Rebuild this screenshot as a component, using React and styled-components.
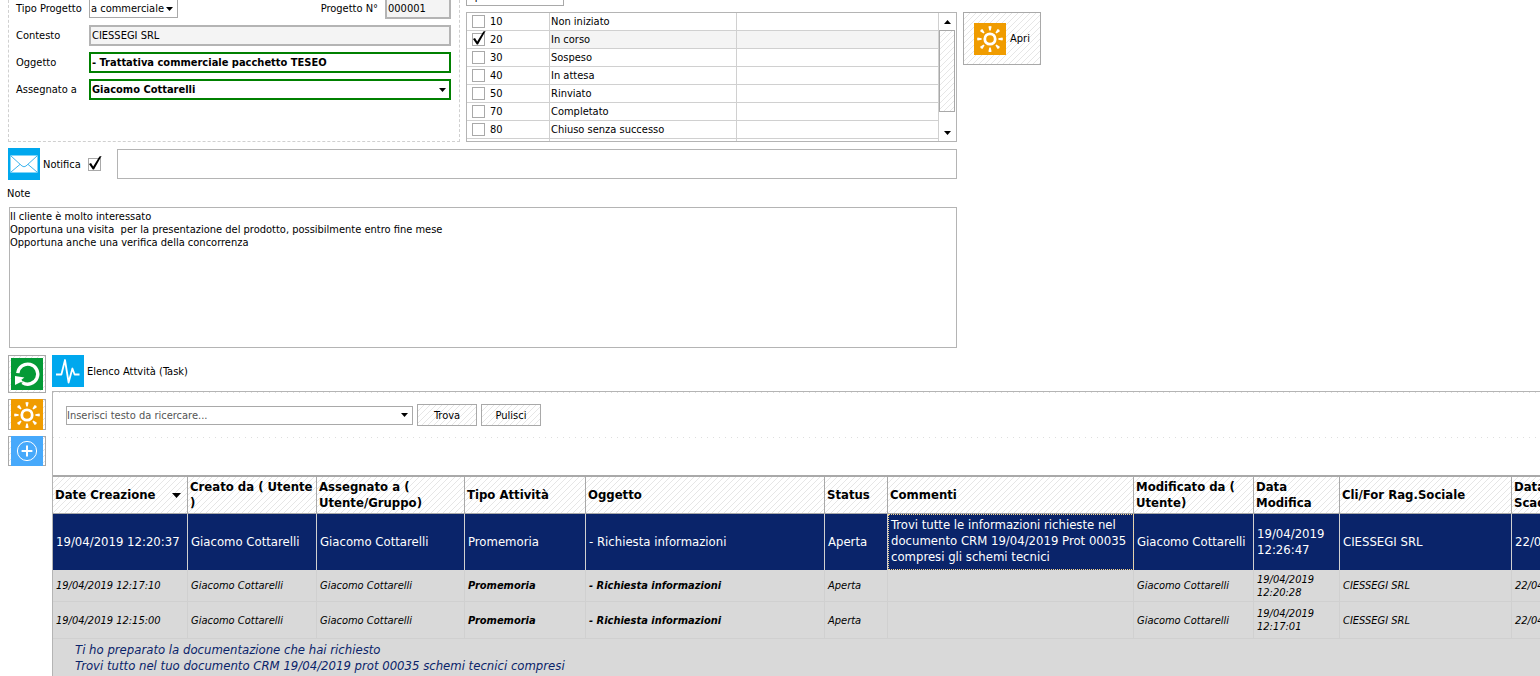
import React from "react";
import styled, { createGlobalStyle } from "styled-components";

const font = `Tahoma, "DejaVu Sans Condensed", "Noto Sans", sans-serif`;
const border = "#a9a9a9";
const softBorder = "#d0d0d0";

const statuses = [
  { code: "10", name: "Non iniziato" },
  { code: "20", name: "In corso", checked: true },
  { code: "30", name: "Sospeso" },
  { code: "40", name: "In attesa" },
  { code: "50", name: "Rinviato" },
  { code: "70", name: "Completato" },
  { code: "80", name: "Chiuso senza successo" },
];

const columns = [
  { title: "Date Creazione", width: 135, sorted: true },
  { title: "Creato da ( Utente )", width: 129 },
  { title: "Assegnato a ( Utente/Gruppo)", width: 148 },
  { title: "Tipo Attività", width: 121 },
  { title: "Oggetto", width: 239 },
  { title: "Status", width: 63 },
  { title: "Commenti", width: 246 },
  { title: "Modificato da ( Utente)", width: 120 },
  { title: "Data Modifica", width: 86 },
  { title: "Cli/For Rag.Sociale", width: 172 },
  { title: "Data Scadenza", width: 90 },
];

const tasks = [
  {
    created: "19/04/2019 12:20:37",
    comment:
      "Trovi tutte le informazioni richieste nel documento CRM 19/04/2019 Prot 00035 compresi gli schemi tecnici",
    modified: "19/04/2019 12:26:47",
    selected: true,
    height: 56,
  },
  {
    created: "19/04/2019 12:17:10",
    comment: "",
    modified: "19/04/2019 12:20:28",
    height: 32,
  },
  {
    created: "19/04/2019 12:15:00",
    comment: "",
    modified: "19/04/2019 12:17:01",
    height: 37,
  },
];

const notes = `Il cliente è molto interessato
Opportuna una visita  per la presentazione del prodotto, possibilmente entro fine mese
Opportuna anche una verifica della concorrenza`;

const SunIcon = ({ height = 32 }) => (
  <svg width="32" height={height} viewBox={`0 0 32 ${height}`} aria-hidden="true">
    <rect width="32" height="32" fill="#f09c00" />
    <circle cx="16" cy="16" r="5.2" fill="none" stroke="#fff" strokeWidth="2.8" />
    {[0, 45, 90, 135, 180, 225, 270, 315].map((angle) => (
      <path
        key={angle}
        d="M14.4 3.6Q16 2.4 17.6 3.6L16.7 7.6H15.3Z"
        fill="#fff"
        transform={`rotate(${angle} 16 16)`}
      />
    ))}
  </svg>
);

const MailIcon = () => (
  <svg width="32" height="32" viewBox="0 0 32 32" aria-hidden="true">
    <rect width="32" height="32" fill="#00a8ee" />
    <rect x="2.5" y="7.5" width="27" height="17" fill="#fff" />
    <path
      d="M3 8L14 18Q16 19.6 18 18L29 8M3 24L12 16.4M29 24L20 16.4"
      fill="none"
      stroke="#3cb4ee"
      strokeWidth="1"
    />
  </svg>
);

const RefreshIcon = () => (
  <svg width="32" height="32" viewBox="0 0 32 32" aria-hidden="true">
    <rect width="32" height="32" fill="#049a36" />
    <path
      d="M6.8 15.2A10 10 0 1 1 11.4 24.6"
      fill="none"
      stroke="#fff"
      strokeWidth="3.4"
    />
    <path d="M4 18L13.4 19.6L10.4 21.8L12.6 24.4L9.4 24.2L4 27Z" fill="#fff" />
  </svg>
);

const PlusIcon = () => (
  <svg width="32" height="30" viewBox="0 0 32 30" aria-hidden="true">
    <rect width="32" height="30" fill="#47a9fb" />
    <circle cx="16" cy="15" r="9.6" fill="none" stroke="#fff" strokeWidth="1" />
    <path d="M16 9.6V20.4M10.6 15H21.4" stroke="#fff" strokeWidth="2" />
  </svg>
);

const PulseIcon = () => (
  <svg width="32" height="32" viewBox="0 0 32 32" aria-hidden="true">
    <rect width="32" height="32" fill="#00a8ee" />
    <path
      d="M4 19.5H9.4L13 5L16.6 27.5L20.4 13.5L22.6 19.5H27.5"
      fill="none"
      stroke="#fff"
      strokeWidth="1.8"
      strokeLinejoin="round"
    />
  </svg>
);

const Arrow = ({ up }) => (
  <svg width="7" height="4" viewBox="0 0 7 4" aria-hidden="true">
    <path d={up ? "M0 4L3.5 0L7 4Z" : "M0 0H7L3.5 4Z"} fill="#000" />
  </svg>
);

const Select = ({ strong, cut, id, value }) => (
  <SelectBox $cut={cut}>
    <SelectField id={id} $strong={strong} $cut={cut}>
      <option>{value}</option>
    </SelectField>
    <SelectArrow>
      <Arrow />
    </SelectArrow>
  </SelectBox>
);

export default function App() {
  return (
    <Page>
      <GlobalStyle />
      <Top>
        <ProjectForm>
          <FirstLabel htmlFor="type">Tipo Progetto</FirstLabel>
          <FirstLine>
            <Select id="type" value="a commerciale" cut />
            <NumberLabel htmlFor="number">Progetto N°</NumberLabel>
            <NumberField id="number" defaultValue="000001" readOnly />
          </FirstLine>
          <Label htmlFor="context">Contesto</Label>
          <ReadField id="context" defaultValue="CIESSEGI SRL" readOnly />
          <Label htmlFor="subject">Oggetto</Label>
          <StrongField
            id="subject"
            defaultValue="- Trattativa commerciale pacchetto TESEO"
          />
          <Label htmlFor="owner">Assegnato a</Label>
          <Select id="owner" value="Giacomo Cottarelli" strong />
        </ProjectForm>

        <StatusPanel>
          <StateClip>
            <StateField aria-label="Stato" defaultValue="Aperto" />
          </StateClip>
          <StatusBox>
            <StatusTable>
              <colgroup>
                <col width="83" />
                <col width="187" />
                <col />
              </colgroup>
              <tbody>
                {statuses.map((s) => (
                  <StatusRow key={s.code} $current={s.checked}>
                    <td>
                      <CheckLabel>
                        <Checkbox defaultChecked={s.checked} />
                        {s.code}
                      </CheckLabel>
                    </td>
                    <td>{s.name}</td>
                    <td />
                  </StatusRow>
                ))}
                <StatusRow>
                  <td />
                  <td />
                  <td />
                </StatusRow>
              </tbody>
            </StatusTable>
            <Scrollbar>
              <ScrollEnd>
                <Arrow up />
              </ScrollEnd>
              <ScrollThumb />
              <ScrollEnd>
                <Arrow />
              </ScrollEnd>
            </Scrollbar>
          </StatusBox>
        </StatusPanel>

        <OpenButton>
          <SunIcon />
          Apri
        </OpenButton>
      </Top>

      <NotifyRow>
        <MailIcon />
        <NotifyLabel>
          Notifica
          <Checkbox defaultChecked />
        </NotifyLabel>
        <NotifyField aria-label="Destinatari notifica" />
      </NotifyRow>

      <NoteLabel htmlFor="notes">Note</NoteLabel>
      <Notes id="notes" defaultValue={notes} />

      <Bottom>
        <Side>
          <SideButton aria-label="Aggiorna" $height={38}>
            <RefreshIcon />
          </SideButton>
          <SideButton aria-label="Apri attività" $height={31}>
            <SunIcon height={31} />
          </SideButton>
          <SideButton aria-label="Nuova attività" $height={30}>
            <PlusIcon />
          </SideButton>
        </Side>
        <Activities>
          <Heading>
            <PulseIcon />
            Elenco Attvità (Task)
          </Heading>
          <Panel>
            <SearchBar>
              <SearchBox>
                <SearchInput
                  aria-label="Cerca"
                  placeholder="Inserisci testo da ricercare..."
                />
                <SelectArrow>
                  <Arrow />
                </SelectArrow>
              </SearchBox>
              <SearchButton>Trova</SearchButton>
              <SearchButton>Pulisci</SearchButton>
            </SearchBar>
            <GroupBar />
            <TaskTable>
              <colgroup>
                {columns.map((c) => (
                  <col key={c.title} width={c.width} />
                ))}
              </colgroup>
              <thead>
                <tr>
                  {columns.map((c) => (
                    <HeadCell key={c.title}>
                      <HeadInner>
                        {c.title}
                        {c.sorted && (
                          <SortArrow viewBox="0 0 9 5" aria-hidden="true">
                            <path d="M0 0H9L4.5 5Z" />
                          </SortArrow>
                        )}
                      </HeadInner>
                    </HeadCell>
                  ))}
                </tr>
              </thead>
              <tbody>
                {tasks.map((t) => (
                  <TaskRow key={t.created} $selected={t.selected} $height={t.height}>
                    <td>{t.created}</td>
                    <td>Giacomo Cottarelli</td>
                    <td>Giacomo Cottarelli</td>
                    <StrongCell $strong={!t.selected}>Promemoria</StrongCell>
                    <StrongCell $strong={!t.selected}>
                      - Richiesta informazioni
                    </StrongCell>
                    <td>Aperta</td>
                    <CommentCell $focus={t.selected}>{t.comment}</CommentCell>
                    <td>Giacomo Cottarelli</td>
                    <td>{t.modified}</td>
                    <td>CIESSEGI SRL</td>
                    <NoWrapCell>22/04/2019</NoWrapCell>
                  </TaskRow>
                ))}
                <tr>
                  <Preview colSpan={columns.length}>
                    Ti ho preparato la documentazione che hai richiesto
                    <br />
                    Trovi tutto nel tuo documento CRM 19/04/2019 prot 00035
                    schemi tecnici compresi
                  </Preview>
                </tr>
              </tbody>
            </TaskTable>
          </Panel>
        </Activities>
      </Bottom>
    </Page>
  );
}

const GlobalStyle = createGlobalStyle`
  * {
    box-sizing: border-box;
  }
  body {
    margin: 0;
    background: #fff;
    overflow: hidden;
  }
  body, input, select, textarea, button {
    font-family: ${font};
    font-size: 11px;
    line-height: 13px;
    color: #000;
  }
  input, select, textarea, button {
    margin: 0;
    border-radius: 0;
    outline: none;
  }
  svg {
    display: block;
    flex: none;
  }
`;

// light diagonal lines used on every raised surface
const hatch = `
  background-color: #fff;
  background-image: linear-gradient(135deg, transparent 42%, #e6e6e6 42%, #e6e6e6 58%, transparent 58%);
  background-size: 6px 6px;
`;

const Page = styled.main`
  height: 100vh;
  display: flex;
  flex-direction: column;
  overflow: hidden;
`;

const Top = styled.div`
  display: flex;
  align-items: flex-start;
  gap: 6px;
  padding-left: 8px;
`;

const ProjectForm = styled.form`
  width: 452px;
  height: 142px;
  display: grid;
  grid-template-columns: 73px 1fr;
  grid-template-rows: 19px 21px 21px 21px;
  row-gap: 6px;
  padding: 0 8px 0 7px;
  border: 1px dashed ${softBorder};
  border-top: 0;
`;

const Label = styled.label`
  align-self: center;
`;

const FirstLabel = styled.label`
  padding-top: 2px;
`;

const FirstLine = styled.div`
  display: flex;
  align-items: flex-start;
`;

const NumberLabel = styled.label`
  margin-left: auto;
  padding: 2px 7px 0 0;
`;

const Field = styled.input`
  width: 100%;
  height: 21px;
  padding: 0 1px;
  border: 2px solid #b4b4b4;
`;

const ReadField = styled(Field)`
  background: #f4f4f4;
`;

const NumberField = styled(ReadField)`
  width: 66px;
  height: 19px;
  border-top: 0;
`;

const StrongField = styled(Field)`
  border-color: #008000;
  font-weight: bold;
`;

const SelectBox = styled.div`
  position: relative;
  width: ${(p) => (p.$cut ? "89px" : "100%")};
`;

const SelectField = styled.select`
  appearance: none;
  display: block;
  width: 100%;
  height: ${(p) => (p.$cut ? "18px" : "21px")};
  padding: 0 12px 0 1px;
  background: #fff;
  border: ${(p) => (p.$strong ? "2px solid #008000" : `1px solid ${border}`)};
  ${(p) => p.$cut && "border-top: 0;"}
  font-weight: ${(p) => (p.$strong ? "bold" : "normal")};
`;

const SelectArrow = styled.span`
  position: absolute;
  right: 5px;
  top: 0;
  bottom: 0;
  display: flex;
  align-items: center;
  pointer-events: none;
`;

const StatusPanel = styled.section`
  width: 491px;
`;

// the state box scrolls out under the window's top edge
const StateClip = styled.div`
  width: 98px;
  height: 6px;
  margin-bottom: 6px;
  display: flex;
  align-items: flex-end;
  overflow: hidden;
`;

const StateField = styled.input`
  width: 100%;
  height: 19px;
  flex: none;
  padding: 0 1px;
  border: 1px solid ${border};
`;

const StatusBox = styled.div`
  display: flex;
  height: 130px;
  border: 1px solid #b4b4b4;
  overflow: hidden;
`;

const StatusTable = styled.table`
  flex: 1;
  table-layout: fixed;
  border-collapse: separate;
  border-spacing: 0;
`;

const StatusRow = styled.tr`
  height: 18px;
  td {
    padding: 0 1px;
    border-right: 1px solid ${softBorder};
    border-bottom: 1px solid ${softBorder};
  }
  td + td {
    background: ${(p) => (p.$current ? "#f4f4f4" : "#fff")};
  }
`;

const CheckLabel = styled.label`
  display: flex;
  align-items: center;
  gap: 5px;
  padding-left: 4px;
`;

const Checkbox = (props) => (
  <CheckWrap>
    <CheckInput type="checkbox" {...props} />
    <CheckMark viewBox="0 0 14 16" aria-hidden="true">
      <path d="M1 9L3 8L5.2 11.5L11.4 1.5L13.6 1L6 14.5H4.8Z" />
    </CheckMark>
  </CheckWrap>
);

const CheckWrap = styled.span`
  position: relative;
  width: 13px;
  height: 13px;
  flex: none;
`;

const CheckMark = styled.svg`
  position: absolute;
  left: 0;
  bottom: 0;
  width: 14px;
  height: 16px;
  display: none;
  pointer-events: none;
`;

const CheckInput = styled.input`
  appearance: none;
  display: block;
  width: 13px;
  height: 13px;
  background: #fff;
  border: 1px solid ${border};
  &:checked + ${CheckMark} {
    display: block;
  }
`;

const Scrollbar = styled.div`
  width: 17px;
  display: flex;
  flex-direction: column;
`;

const ScrollEnd = styled.div`
  height: 17px;
  display: flex;
  align-items: center;
  justify-content: center;
  &:last-child {
    margin-top: auto;
  }
`;

const ScrollThumb = styled.div`
  width: 16px;
  height: 82px;
  border: 1px solid ${border};
  ${hatch}
`;

const Button = styled.button.attrs({ type: "button" })`
  display: flex;
  align-items: center;
  justify-content: center;
  padding: 0;
  border: 1px solid ${border};
  ${hatch}
`;

const OpenButton = styled(Button)`
  width: 78px;
  height: 53px;
  margin-top: 12px;
  gap: 4px;
`;

const NotifyRow = styled.div`
  width: 949px;
  display: flex;
  align-items: center;
  margin: 6px 0 0 8px;
`;

const NotifyLabel = styled.label`
  display: flex;
  align-items: center;
  gap: 7px;
  margin: 0 16px 0 3px;
`;

const NotifyField = styled.input`
  flex: 1;
  height: 30px;
  border: 1px solid #b4b4b4;
`;

const NoteLabel = styled.label`
  padding: 7px 0 0 7px;
`;

const Notes = styled.textarea`
  width: 948px;
  height: 141px;
  flex: none;
  margin: 7px 0 0 9px;
  padding: 2px 0;
  border: 1px solid #b4b4b4;
  resize: none;
`;

const Bottom = styled.div`
  flex: 1;
  min-height: 0;
  display: flex;
  gap: 6px;
  padding: 7px 0 0 8px;
`;

const Side = styled.div`
  display: flex;
  flex-direction: column;
  gap: 6px;
`;

const SideButton = styled(Button)`
  width: 38px;
  height: ${(p) => p.$height}px;
`;

const Activities = styled.section`
  flex: 1;
  min-width: 0;
  display: flex;
  flex-direction: column;
`;

const Heading = styled.div`
  display: flex;
  align-items: center;
  gap: 3px;
  margin-bottom: 4px;
`;

const Panel = styled.div`
  flex: 1;
  min-height: 0;
  border-top: 1px solid #b4b4b4;
  border-left: 1px solid #b4b4b4;
  overflow: hidden;
`;

const dots = `repeating-linear-gradient(90deg, #dedede 0, #dedede 1px, transparent 1px, transparent 6px)`;

const SearchBar = styled.div`
  height: 46px;
  display: flex;
  align-items: center;
  gap: 4px;
  padding-left: 13px;
  background: ${dots} 0 0 / 100% 1px no-repeat, ${dots} 0 100% / 100% 1px no-repeat;
`;

const SearchBox = styled.div`
  position: relative;
  width: 347px;
`;

const SearchInput = styled.input`
  display: block;
  width: 100%;
  height: 19px;
  padding: 0 16px 0 0;
  border: 1px solid ${border};
  &::placeholder {
    color: #555;
    opacity: 1;
  }
`;

const SearchButton = styled(Button)`
  width: 60px;
  height: 22px;
`;

const GroupBar = styled.div`
  height: 37px;
`;

const TaskTable = styled.table`
  width: 1549px;
  table-layout: fixed;
  border-collapse: separate;
  border-spacing: 0;
  border-top: 2px solid ${border};
  font-size: 13px;
  line-height: 16px;
  td {
    padding: 0 2px 0 3px;
  }
`;

const HeadCell = styled.th`
  height: 37px;
  padding: 0 0 0 2px;
  text-align: left;
  border-right: 1px solid ${border};
  border-bottom: 1px solid ${border};
  ${hatch}
`;

const HeadInner = styled.div`
  display: flex;
  align-items: center;
  justify-content: space-between;
`;

const SortArrow = styled.svg`
  width: 9px;
  height: 5px;
  margin-right: 6px;
`;

const TaskRow = styled.tr`
  height: ${(p) => p.$height}px;
  color: ${(p) => (p.$selected ? "#fff" : "#000")};
  background: ${(p) => (p.$selected ? "#0a246a" : "#d9d9d9")};
  font-size: ${(p) => (p.$selected ? "13px" : "11px")};
  line-height: ${(p) => (p.$selected ? "16px" : "13px")};
  font-style: ${(p) => (p.$selected ? "normal" : "italic")};
  td {
    border-right: 1px solid ${softBorder};
    border-bottom: ${(p) => (p.$selected ? "0" : `1px solid ${softBorder}`)};
  }
`;

const StrongCell = styled.td`
  font-weight: ${(p) => (p.$strong ? "bold" : "normal")};
`;

const CommentCell = styled.td`
  vertical-align: top;
  outline: ${(p) => (p.$focus ? "1px dotted #f5d58c" : "none")};
  outline-offset: -1px;
  && {
    padding-top: 3px;
  }
`;

const NoWrapCell = styled.td`
  white-space: nowrap;
`;

const Preview = styled.td`
  height: 60px;
  vertical-align: top;
  background: #d9d9d9;
  color: #0a246a;
  font-style: italic;
  && {
    padding: 3px 0 0 22px;
  }
`;
